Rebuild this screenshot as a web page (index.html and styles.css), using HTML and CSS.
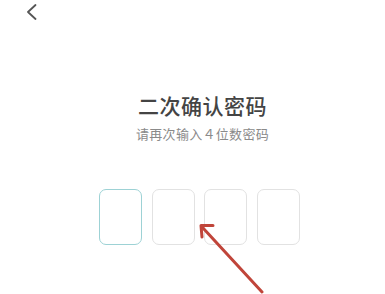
FILE: index.html
```html
<!DOCTYPE html>
<html lang="zh">
<head>
<meta charset="utf-8">
<link rel="stylesheet" href="styles.css">
</head>
<body>
<div class="page">
  <div class="header">
    <svg class="back" width="12" height="17" viewBox="0 0 12 17"><polyline points="9.5,1 2,8 9.5,15" fill="none" stroke="#555" stroke-width="1.8" stroke-linecap="round" stroke-linejoin="round"/></svg>
  </div>
  <div class="main">
    <h1 class="title">二次确认密码</h1>
    <p class="sub">请再次输入４位数密码</p>
    <div class="codes">
      <div class="box active"></div>
      <div class="box"></div>
      <div class="box"></div>
      <div class="box"></div>
    </div>
  </div>
  <svg class="arrow" width="385" height="294" viewBox="0 0 385 294">
    <line x1="262" y1="292" x2="203" y2="228" stroke="#c0453a" stroke-width="3" stroke-linecap="round"/>
    <polyline points="213,225.5 201,225.5 202,237" fill="none" stroke="#c0453a" stroke-width="3" stroke-linecap="round" stroke-linejoin="round"/>
  </svg>
</div>
</body>
</html>
```
FILE: styles.css
```css
html, body {
  margin: 0;
  padding: 0;
  background: #fff;
}
.page {
  position: relative;
  width: 385px;
  height: 294px;
  overflow: hidden;
  font-family: "Noto Sans CJK SC", "Noto Sans", sans-serif;
}
.header {
  height: 40px;
  padding: 4px 0 0 26px;
  box-sizing: border-box;
}
.back {
  display: block;
}
.main {
  display: flex;
  flex-direction: column;
  align-items: center;
  padding-left: 14px;
}
.title {
  margin: 51px 0 0 6px;
  font-size: 21px;
  line-height: 28px;
  font-weight: 500;
  color: #444;
  letter-spacing: 0.5px;
}
.sub {
  margin: 6px 0 0 6px;
  font-size: 13px;
  line-height: 18px;
  color: #8a8a8a;
  letter-spacing: 0.3px;
}
.codes {
  display: flex;
  gap: 9.5px;
  margin-top: 46px;
}
.box {
  width: 43px;
  height: 56px;
  box-sizing: border-box;
  border: 1px solid #e2e2e2;
  border-radius: 7px;
}
.box.active {
  border-color: #9dd2d5;
}
.arrow {
  position: absolute;
  left: 0;
  top: 0;
}
```
